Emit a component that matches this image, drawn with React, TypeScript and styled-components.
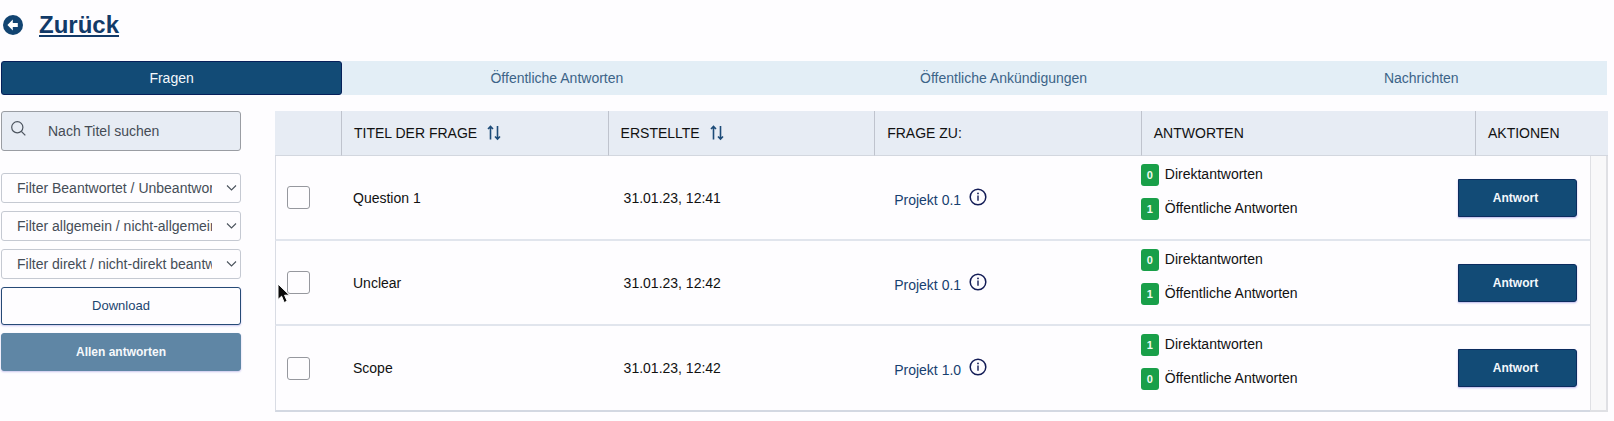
import React from "react";
import styled, { createGlobalStyle } from "styled-components";

const navy = "#124b76";

const GlobalStyle = createGlobalStyle`
  *, *::before, *::after { box-sizing: border-box; }
  body {
    margin: 0;
    background: #fefdff;
    color: #111;
    font-family: "Liberation Sans", Arial, sans-serif;
    font-size: 14px;
    line-height: 20px;
  }
  button, input, select { font: inherit; margin: 0; }
`;

const Page = styled.div`
  padding: 11px 6px 8px 1px;
`;

const BackLink = styled.a`
  display: flex;
  align-items: center;
  gap: 16px;
  width: fit-content;
  padding-left: 2px;
  color: #123a68;
  font-size: 24px;
  font-weight: bold;
  line-height: 28px;
  text-decoration: none;
`;

const BackText = styled.span`
  text-decoration: underline;
  text-decoration-thickness: 2px;
  text-underline-offset: 2px;
`;

const Tabs = styled.nav`
  display: flex;
  margin: 22px 1px 16px 0;
  background: #e3eef6;
`;

const Tab = styled.button<{ $active?: boolean }>`
  flex: 1 1 auto;
  height: 34px;
  padding: 0;
  border: 1px solid ${(p) => (p.$active ? "#06205a" : "transparent")};
  border-radius: 3px;
  background: ${(p) => (p.$active ? navy : "transparent")};
  color: ${(p) => (p.$active ? "#f4f8fc" : "#3c6488")};
  cursor: pointer;
`;

const Content = styled.div`
  display: flex;
  align-items: flex-start;
  gap: 34px;
`;

const Sidebar = styled.aside`
  display: flex;
  flex: 0 0 240px;
  flex-direction: column;
  gap: 8px;
`;

const SearchBox = styled.label`
  display: flex;
  align-items: center;
  gap: 22px;
  height: 40px;
  margin-bottom: 14px;
  padding: 0 9px;
  border: 1px solid #9a9da3;
  border-radius: 3px;
  background: #e7ecf4;
  color: #4c545e;

  svg { flex: none; margin-bottom: 6px; }
`;

const SearchInput = styled.input`
  flex: 1;
  min-width: 0;
  padding: 0;
  border: 0;
  outline: 0;
  background: transparent;
  color: #454b54;
  &::placeholder { color: #454b54; opacity: 1; }
`;

const SelectBox = styled.div`
  position: relative;
  display: flex;
  color: #4a525c;

  svg {
    position: absolute;
    top: 11px;
    right: 4px;
    pointer-events: none;
  }
`;

const Select = styled.select`
  width: 100%;
  height: 30px;
  padding: 0 28px 0 15px;
  border: 1px solid #c5c9d2;
  border-radius: 3px;
  background: #fefdff;
  color: #454d57;
  appearance: none;
`;

const SideButton = styled.button<{ $filled?: boolean }>`
  height: 38px;
  border: 1px solid ${(p) => (p.$filled ? "#5f86a5" : "#264a76")};
  border-radius: 3px;
  background: ${(p) => (p.$filled ? "#5f86a5" : "#fefdff")};
  box-shadow: 0 1px 2px #c9c6ee;
  color: ${(p) => (p.$filled ? "#f6f9fc" : "#1c4670")};
  font-size: ${(p) => (p.$filled ? 12 : 13)}px;
  font-weight: ${(p) => (p.$filled ? "bold" : "normal")};
  cursor: pointer;
`;

const TablePanel = styled.main`
  flex: 1;
  min-width: 0;
`;

const Table = styled.table`
  width: 100%;
  table-layout: fixed;
  border-collapse: separate;
  border-spacing: 0;
`;

const Col = styled.col<{ $width?: string }>`
  width: ${(p) => p.$width ?? "auto"};
`;

const HeadCell = styled.th`
  height: 45px;
  padding: 0 12px;
  border-bottom: 1px solid #d3d7df;
  background: #e7ecf4;
  font-weight: normal;
  text-align: left;
  white-space: nowrap;

  & + & { border-left: 1px solid #bfc3cd; }
`;

const HeadLabel = styled.span`
  display: flex;
  align-items: center;
  gap: 8px;
`;

const SortButton = styled.button`
  display: flex;
  padding: 0;
  border: 0;
  background: none;
  color: #1d4b78;
  cursor: pointer;
`;

const Cell = styled.td<{ $indent?: number }>`
  height: 85px;
  padding: 0 0 0 ${(p) => p.$indent ?? 0}px;
  border-bottom: 2px solid #e1e5ed;

  &:first-child { border-left: 1px solid #d9dce4; }
  tr:last-child > & {
    height: 86px;
    border-bottom-color: #d3d8e2;
  }
`;

const ScrollTrack = styled.td`
  padding: 0;
  border: solid #dfe0e4;
  border-width: 0 2px 2px 1px;
  background: #f8f8f9;
`;

const Checkbox = styled.input`
  display: block;
  width: 23px;
  height: 23px;
  border: 1px solid #96989e;
  border-radius: 3px;
  background: #fefdff;
  appearance: none;
`;

const Project = styled.div`
  display: flex;
  align-items: center;
  gap: 8px;
  color: #173f70;

  svg { margin-bottom: 2px; }
`;

const ProjectLink = styled.a`
  padding-top: 4px;
  color: inherit;
  text-decoration: none;
`;

const Counts = styled.div`
  display: flex;
  flex-direction: column;
  gap: 12px;
  padding-bottom: 12px;
`;

const Count = styled.div`
  display: flex;
  gap: 6px;
`;

const Badge = styled.span`
  width: 18px;
  height: 22px;
  border-radius: 3px;
  background: #199f49;
  color: #effbf0;
  font-size: 11px;
  font-weight: bold;
  line-height: 22px;
  text-align: center;
`;

const ReplyButton = styled.button`
  width: 119px;
  height: 38px;
  padding: 0 8px 0 4px;
  border: 1px solid #0b2c5e;
  border-radius: 0 3px 3px 0;
  background: ${navy};
  box-shadow: 0 1px 2px #b9b6ea;
  color: #f4f8fc;
  font-size: 12px;
  font-weight: bold;
  cursor: pointer;
`;

const Pointer = styled.svg`
  position: absolute;
  top: 283px;
  left: 277px;
  pointer-events: none;
`;

const BackIcon = () => (
  <svg width="20" height="20" viewBox="0 0 20 20" aria-hidden="true">
    <circle cx="10" cy="10" r="10" fill="#124471" />
    <path d="M9.8 4.6 4.4 10l5.4 5.4v-3.3h5V7.9h-5z" fill="#fff" />
  </svg>
);

const SearchIcon = () => (
  <svg width="15" height="15" viewBox="0 0 15 15" fill="none" stroke="currentColor" aria-hidden="true">
    <circle cx="6.3" cy="6.3" r="5.6" strokeWidth="1.2" />
    <path d="m10.3 10.3 4 4" strokeWidth="1.2" />
  </svg>
);

const ChevronIcon = () => (
  <svg width="11" height="8" viewBox="0 0 11 8" fill="none" stroke="currentColor" aria-hidden="true">
    <path d="m1 1.5 4.5 4.500L10 1.500" strokeWidth="1.1" />
  </svg>
);

const SortIcon = () => (
  <svg width="18" height="16" viewBox="0 0 18 16" fill="none" stroke="currentColor" strokeWidth="1.6" aria-hidden="true">
    <path d="M5.500 14.500V1.500M3 4l2.500-2.500L8 4M12.500 1v13M10 11.500l2.500 2.500 2.500-2.500" />
  </svg>
);

const InfoIcon = () => (
  <svg width="18" height="18" viewBox="0 0 18 18" fill="none" stroke="#131c56" aria-hidden="true">
    <circle cx="9" cy="9" r="7.8" strokeWidth="1.5" />
    <path d="M9 7.600v5.200" strokeWidth="1.400" />
    <circle cx="9" cy="5.400" r="0.900" fill="#131c56" stroke="none" />
  </svg>
);

const filters = [
  "Filter Beantwortet / Unbeantwortet",
  "Filter allgemein / nicht-allgemein",
  "Filter direkt / nicht-direkt beantwortet",
];

const rows = [
  { title: "Question 1", created: "31.01.23, 12:41", project: "Projekt 0.1", direct: 0, open: 1 },
  { title: "Unclear", created: "31.01.23, 12:42", project: "Projekt 0.1", direct: 0, open: 1 },
  { title: "Scope", created: "31.01.23, 12:42", project: "Projekt 1.0", direct: 1, open: 0 },
];

export default function App() {
  return (
    <Page>
      <GlobalStyle />
      <BackLink href="#">
        <BackIcon />
        <BackText>Zurück</BackText>
      </BackLink>

      <Tabs>
        <Tab $active>Fragen</Tab>
        <Tab>Öffentliche Antworten</Tab>
        <Tab>Öffentliche Ankündigungen</Tab>
        <Tab>Nachrichten</Tab>
      </Tabs>

      <Content>
        <Sidebar>
          <SearchBox>
            <SearchIcon />
            <SearchInput type="text" aria-label="Nach Titel suchen" placeholder="Nach Titel suchen" />
          </SearchBox>
          {filters.map((label) => (
            <SelectBox key={label}>
              <Select aria-label={label}>
                <option>{label}</option>
              </Select>
              <ChevronIcon />
            </SelectBox>
          ))}
          <SideButton>Download</SideButton>
          <SideButton $filled>Allen antworten</SideButton>
        </Sidebar>

        <TablePanel>
          <Table>
            <colgroup>
              <Col $width="66px" />
              <Col $width="20%" />
              <Col $width="20%" />
              <Col $width="20%" />
              <Col />
              <Col $width="17px" />
              <Col $width="115px" />
              <Col $width="18px" />
            </colgroup>
            <thead>
              <tr>
                <HeadCell />
                <HeadCell>
                  <HeadLabel>
                    TITEL DER FRAGE
                    <SortButton aria-label="Nach Titel sortieren"><SortIcon /></SortButton>
                  </HeadLabel>
                </HeadCell>
                <HeadCell>
                  <HeadLabel>
                    ERSTELLTE
                    <SortButton aria-label="Nach Datum sortieren"><SortIcon /></SortButton>
                  </HeadLabel>
                </HeadCell>
                <HeadCell>FRAGE ZU:</HeadCell>
                <HeadCell colSpan={2}>ANTWORTEN</HeadCell>
                <HeadCell colSpan={2}>AKTIONEN</HeadCell>
              </tr>
            </thead>
            <tbody>
              {rows.map((row, index) => (
                <tr key={row.title}>
                  <Cell $indent={11}>
                    <Checkbox type="checkbox" aria-label={row.title} />
                  </Cell>
                  <Cell $indent={12}>{row.title}</Cell>
                  <Cell $indent={16}>{row.created}</Cell>
                  <Cell $indent={20}>
                    <Project>
                      <ProjectLink href="#">{row.project}</ProjectLink>
                      <InfoIcon />
                    </Project>
                  </Cell>
                  <Cell>
                    <Counts>
                      <Count><Badge>{row.direct}</Badge>Direktantworten</Count>
                      <Count><Badge>{row.open}</Badge>Öffentliche Antworten</Count>
                    </Counts>
                  </Cell>
                  <Cell colSpan={2}>
                    <ReplyButton>Antwort</ReplyButton>
                  </Cell>
                  {index === 0 && <ScrollTrack rowSpan={rows.length} />}
                </tr>
              ))}
            </tbody>
          </Table>
        </TablePanel>
      </Content>

      <Pointer width="14" height="22" viewBox="0 0 14 22" aria-hidden="true">
        <path d="M1 1v15.500l3.600-3.300 2.600 6.300 3-1.300-2.600-6h4.900z" fill="#0a0a0a" stroke="#fff" strokeWidth="1" />
      </Pointer>
    </Page>
  );
}
